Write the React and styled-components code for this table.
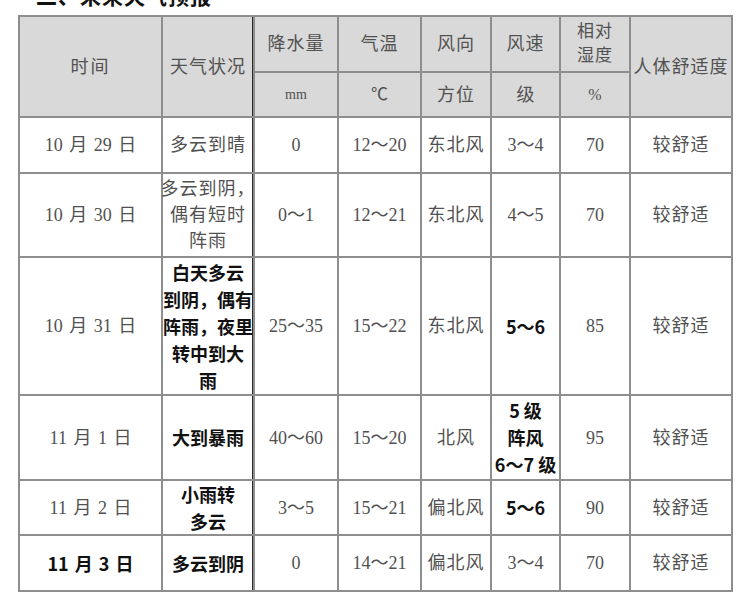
import React from "react";
import styled, { createGlobalStyle } from "styled-components";

const Global = createGlobalStyle`
  html, body { margin: 0; padding: 0; background: #ffffff; }
  body { font-family: "Liberation Serif", "Noto Sans CJK SC", serif; }
`;

const Page = styled.div`
  width: 748px;
  height: 598px;
  overflow: hidden;
  background: #ffffff;
`;

const TitleStrip = styled.div`
  height: 15px;
  overflow: hidden;
  padding-left: 36px;
`;

const TitleText = styled.h2`
  margin: -16px 0 0 0;
  font-family: "Noto Sans CJK SC", sans-serif;
  font-weight: 700;
  font-size: 21px;
  line-height: 22px;
  letter-spacing: 1px;
  color: #111;
  white-space: nowrap;
`;

const Table = styled.div`
  display: inline-grid;
  margin-left: 18px;
  grid-template-columns: 141px 90px 82px 81px 68px 67px 68px 100px;
  grid-template-rows: 54px 43px 54px 82px 136px 83px 53px 54px;
  gap: 2px;
  padding: 2px;
  background: #8e8e8e;
`;

const Cell = styled.div`
  display: flex;
  align-items: center;
  justify-content: center;
  text-align: center;
  white-space: pre;
  background: ${(p) => (p.$head ? "#d9d9d9" : "#ffffff")};
  color: ${(p) => (p.$bold ? "#111111" : "#515151")};
  font-family: ${(p) =>
    p.$bold
      ? '"Noto Sans CJK SC", sans-serif'
      : '"Liberation Serif", "Noto Sans CJK SC", serif'};
  font-weight: ${(p) => (p.$bold ? 700 : 400)};
  font-size: ${(p) => p.$size || 18}px;
  line-height: ${(p) => p.$lh || 26}px;
  letter-spacing: ${(p) => p.$ls ?? 0}px;
  word-spacing: ${(p) => p.$ws ?? 0}px;
  grid-column: ${(p) => p.$col || "auto"};
  grid-row: ${(p) => p.$row || "auto"};
  box-shadow: ${(p) => (p.$dark ? "inset -1px 0 0 #2a2a2a" : "none")};
`;

const rows = [
  {
    date: "10 月 29 日",
    weather: "多云到晴",
    rain: "0",
    temp: "12～20",
    dir: "东北风",
    speed: "3～4",
    hum: "70",
    comfort: "较舒适",
  },
  {
    date: "10 月 30 日",
    weather: "多云到阴，\n偶有短时\n阵雨",
    rain: "0～1",
    temp: "12～21",
    dir: "东北风",
    speed: "4～5",
    hum: "70",
    comfort: "较舒适",
  },
  {
    date: "10 月 31 日",
    weather: "白天多云\n到阴，偶有\n阵雨，夜里\n转中到大\n雨",
    weatherBold: true,
    rain: "25～35",
    temp: "15～22",
    dir: "东北风",
    speed: "5～6",
    speedBold: true,
    hum: "85",
    comfort: "较舒适",
  },
  {
    date: "11 月 1 日",
    weather: "大到暴雨",
    weatherBold: true,
    rain: "40～60",
    temp: "15～20",
    dir: "北风",
    speed: "5 级\n阵风\n6～7 级",
    speedBold: true,
    hum: "95",
    comfort: "较舒适",
  },
  {
    date: "11 月 2 日",
    weather: "小雨转\n多云",
    weatherBold: true,
    rain: "3～5",
    temp: "15～21",
    dir: "偏北风",
    speed: "5～6",
    speedBold: true,
    hum: "90",
    comfort: "较舒适",
  },
  {
    date: "11 月 3 日",
    dateBold: true,
    weather: "多云到阴",
    weatherBold: true,
    rain: "0",
    temp: "14～21",
    dir: "偏北风",
    speed: "3～4",
    hum: "70",
    comfort: "较舒适",
  },
];

export default function App() {
  return (
    <Page>
      <Global />
      <TitleStrip>
        <TitleText>二、未来天气预报</TitleText>
      </TitleStrip>
      <Table>
        <Cell $head $col="1" $row="1 / span 2" $ls={2}>时间</Cell>
        <Cell $head $dark $col="2" $row="1 / span 2" $ls={1}>天气状况</Cell>
        <Cell $head $ls={1}>降水量</Cell>
        <Cell $head $ls={1}>气温</Cell>
        <Cell $head $ls={1}>风向</Cell>
        <Cell $head $ls={1}>风速</Cell>
        <Cell $head $ls={1} $size={17} $lh={24}>{"相对\n湿度"}</Cell>
        <Cell $head $col="8" $row="1 / span 2" $ls={1}>人体舒适度</Cell>
        <Cell $head $size={14}>mm</Cell>
        <Cell $head $size={17}>℃</Cell>
        <Cell $head $ls={1}>方位</Cell>
        <Cell $head>级</Cell>
        <Cell $head $size={16}>%</Cell>
        {rows.map((r, i) => (
          <React.Fragment key={i}>
            <Cell $bold={r.dateBold} $ws={2}>{r.date}</Cell>
            <Cell
              $dark
              $bold={r.weatherBold}
              $ls={r.weatherBold ? 0 : 1}
              $lh={r.weatherBold ? 27 : 26}
            >
              {r.weather}
            </Cell>
            <Cell>{r.rain}</Cell>
            <Cell>{r.temp}</Cell>
            <Cell $ls={1}>{r.dir}</Cell>
            <Cell $bold={r.speedBold} $lh={27}>{r.speed}</Cell>
            <Cell>{r.hum}</Cell>
            <Cell $ls={1}>{r.comfort}</Cell>
          </React.Fragment>
        ))}
      </Table>
    </Page>
  );
}
